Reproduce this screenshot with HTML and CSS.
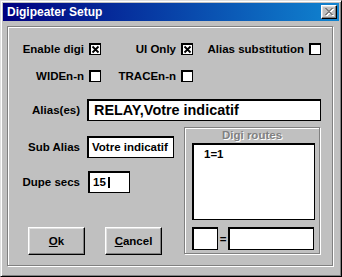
FILE: index.html
```html
<!DOCTYPE html>
<html lang="en">
<head>
  <meta charset="UTF-8">
  <title>Digipeater Setup</title>
  <link rel="stylesheet" href="styles.css">
</head>
<body>
  <div class="window">
    <div class="titlebar">
      <span class="title">Digipeater Setup</span>
      <button class="close-btn">
        <svg width="9" height="8" viewBox="0 0 9 8" shape-rendering="crispEdges">
          <g fill="#fff" transform="translate(1,1)">
            <rect x="0" y="0" width="2" height="1"/><rect x="6" y="0" width="2" height="1"/>
            <rect x="1" y="1" width="2" height="1"/><rect x="5" y="1" width="2" height="1"/>
            <rect x="2" y="2" width="4" height="1"/><rect x="3" y="3" width="2" height="1"/>
            <rect x="2" y="4" width="4" height="1"/>
            <rect x="1" y="5" width="2" height="1"/><rect x="5" y="5" width="2" height="1"/>
            <rect x="0" y="6" width="2" height="1"/><rect x="6" y="6" width="2" height="1"/>
          </g>
          <g fill="#808080">
            <rect x="0" y="0" width="2" height="1"/><rect x="6" y="0" width="2" height="1"/>
            <rect x="1" y="1" width="2" height="1"/><rect x="5" y="1" width="2" height="1"/>
            <rect x="2" y="2" width="4" height="1"/><rect x="3" y="3" width="2" height="1"/>
            <rect x="2" y="4" width="4" height="1"/>
            <rect x="1" y="5" width="2" height="1"/><rect x="5" y="5" width="2" height="1"/>
            <rect x="0" y="6" width="2" height="1"/><rect x="6" y="6" width="2" height="1"/>
          </g>
        </svg>
      </button>
    </div>

    <div class="frame">
      <div class="checks">
        <label class="check">Enable digi <span class="box"><svg width="9" height="9" viewBox="0 0 9 9"><path d="M1.5 1.5 L7.5 7.5 M7.5 1.5 L1.5 7.5" stroke="#000" stroke-width="1.8"/></svg></span></label>
        <label class="check">UI Only <span class="box"><svg width="9" height="9" viewBox="0 0 9 9"><path d="M1.5 1.5 L7.5 7.5 M7.5 1.5 L1.5 7.5" stroke="#000" stroke-width="1.8"/></svg></span></label>
        <label class="check">Alias substitution <span class="box"></span></label>
        <label class="check">WIDEn-n <span class="box"></span></label>
        <label class="check">TRACEn-n <span class="box"></span></label>
      </div>

      <div class="field-row alias-row">
        <span class="field-label">Alias(es)</span>
        <div class="edit alias-edit">RELAY,Votre indicatif</div>
      </div>

      <div class="lower">
        <div class="left-col">
          <div class="field-row">
            <span class="field-label">Sub Alias</span>
            <div class="edit sub-edit">Votre indicatif</div>
          </div>
          <div class="field-row dupe-row">
            <span class="field-label">Dupe secs</span>
            <div class="edit dupe-edit">15<span class="caret"></span></div>
          </div>
          <div class="buttons">
            <button class="btn"><u>O</u>k</button>
            <button class="btn"><u>C</u>ancel</button>
          </div>
        </div>

        <div class="group">
          <div class="group-title">Digi routes</div>
          <div class="edit listbox">
            <div class="list-item">1=1</div>
          </div>
          <div class="route-edit">
            <div class="edit route-from"></div>
            <span class="eq">=</span>
            <div class="edit route-to"></div>
          </div>
        </div>
      </div>
    </div>
  </div>
</body>
</html>
```

FILE: styles.css
```css
body {
  margin: 0;
  background-color: #c0c0c0;
  font-family: "Liberation Sans", Arial, sans-serif;
  font-size: 11.5px;
  font-weight: bold;
  color: #000;
}

.window {
  width: 342px;
  height: 277px;
  box-sizing: border-box;
  padding: 2px;
  background-color: #c0c0c0;
  border: 1px solid;
  border-color: #dfdfdf #000 #000 #dfdfdf;
  box-shadow: inset 1px 1px #fff, inset -1px -1px #808080;
}

/* title bar */
.titlebar {
  height: 18px;
  display: flex;
  align-items: center;
  justify-content: space-between;
  padding: 0 2px 0 4px;
  background: linear-gradient(90deg, #000080, #1084d0);
}

.title {
  color: #fff;
  font-size: 12px;
  font-weight: bold;
}

.close-btn {
  width: 16px;
  height: 14px;
  padding: 0 0 0 1px;
  display: flex;
  align-items: center;
  justify-content: center;
  box-sizing: border-box;
  background-color: #c0c0c0;
  border: 1px solid;
  border-color: #fff #000 #000 #fff;
  box-shadow: inset -1px -1px #808080, inset 1px 1px #dfdfdf;
}

/* etched frame */
.frame {
  margin: 5px 0 0 4px;
  width: 326px;
  height: 240px;
  box-sizing: border-box;
  border: 1px solid #808080;
  box-shadow: inset 1px 1px #fff, 1px 1px #fff;
}

.checks {
  display: grid;
  grid-template-columns: 93px 92px 128px;
  row-gap: 14px;
  padding-top: 15px;
}

.check {
  display: flex;
  justify-content: flex-end;
  align-items: center;
  gap: 5px;
  height: 13px;
  white-space: nowrap;
}

.box {
  width: 12px;
  height: 12px;
  box-sizing: border-box;
  background-color: #fff;
  border-style: solid;
  border-color: #000;
  border-width: 2px 1px 1px 2px;
  display: flex;
  align-items: center;
  justify-content: center;
}

.edit {
  box-sizing: border-box;
  background-color: #fff;
  border-style: solid;
  border-color: #000;
  border-width: 2px 1px 1px 2px;
  white-space: nowrap;
  overflow: hidden;
}

.field-row {
  display: flex;
  align-items: center;
  gap: 7px;
}

.field-label {
  width: 72px;
  text-align: right;
}

.alias-row {
  margin-top: 17px;
}

.alias-edit {
  width: 234px;
  height: 22px;
  line-height: 19px;
  padding-left: 5px;
  font-size: 14.4px;
}

.lower {
  display: flex;
  margin-top: 6px;
}

.left-col {
  width: 176px;
  padding-top: 9px;
}

.sub-edit {
  width: 87px;
  height: 22px;
  line-height: 19px;
  padding-left: 3px;
}

.dupe-row {
  margin-top: 13px;
}

.dupe-edit {
  width: 42px;
  height: 22px;
  line-height: 19px;
  padding-left: 3px;
  margin-left: 1px;
  display: flex;
  align-items: center;
}

.caret {
  display: inline-block;
  width: 2px;
  height: 11px;
  margin-left: 2px;
  background-color: #000;
}

.buttons {
  display: flex;
  gap: 20px;
  padding-left: 20px;
  margin-top: 34px;
}

.btn {
  width: 57px;
  height: 28px;
  padding: 0;
  box-sizing: border-box;
  font-family: "Liberation Sans", Arial, sans-serif;
  font-size: 11.5px;
  font-weight: bold;
  color: #000;
  background-color: #c0c0c0;
  border: 1px solid;
  border-color: #fff #000 #000 #fff;
  box-shadow: inset -1px -1px #808080, inset 1px 1px #dfdfdf;
}

/* Digi routes group */
.group {
  width: 136px;
  height: 127px;
  box-sizing: border-box;
  border: 1px solid #808080;
  box-shadow: inset 1px 1px #fff, 1px 1px #fff;
  padding: 0 0 0 7px;
}

.group-title {
  height: 15px;
  line-height: 14px;
  margin-left: -7px;
  text-align: center;
  color: #808080;
  text-shadow: 1px 1px #fff;
}

.listbox {
  width: 123px;
  height: 77px;
  padding: 2px 0 0 10px;
}

.list-item {
  line-height: 14px;
}

.route-edit {
  display: flex;
  align-items: center;
  margin-top: 7px;
}

.route-from {
  width: 26px;
  height: 23px;
}

.eq {
  width: 10px;
  text-align: center;
}

.route-to {
  width: 86px;
  height: 23px;
}
```
